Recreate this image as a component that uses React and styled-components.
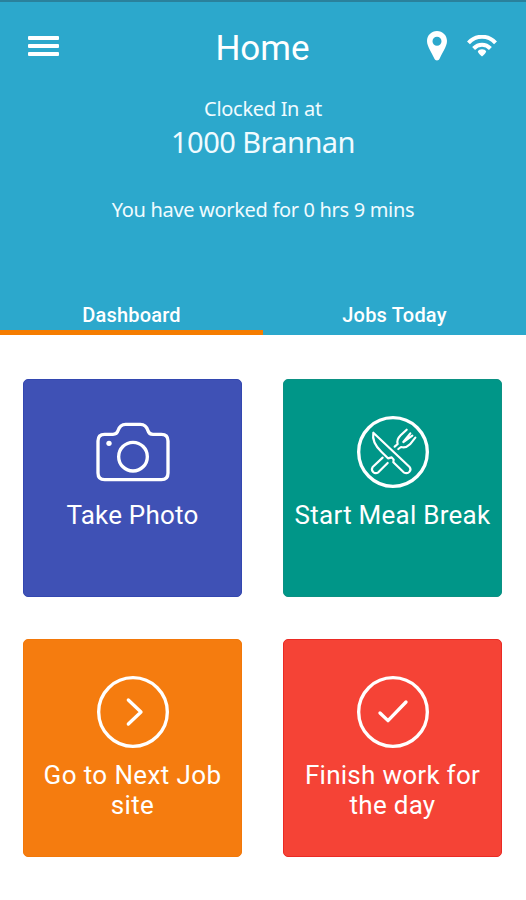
import { useState } from 'react';
import styled, { createGlobalStyle } from 'styled-components';

const tabs = ['Dashboard', 'Jobs Today'];

const actions = [
  { label: 'Take Photo', color: '#3f51b5', edge: '#3347b0', spacing: 0.2, icon: CameraIcon },
  { label: 'Start Meal Break', color: '#009688', edge: '#0b9183', spacing: 0.25, icon: MealIcon },
  { label: 'Go to Next Job site', color: '#f57c0f', edge: '#f27809', spacing: 0.38, icon: NextIcon },
  { label: 'Finish work for the day', color: '#f54336', edge: '#ea2a24', spacing: 0.28, icon: DoneIcon },
];

function App() {
  const [activeTab, setActiveTab] = useState('Dashboard');

  return (
    <Page>
      <GlobalStyle />
      <Header>
        <Toolbar>
          <MenuButton aria-label="Menu">
            <MenuBar />
            <MenuBar />
            <MenuBar />
          </MenuButton>
          <Title>Home</Title>
          <StatusIcons>
            <svg width="20" height="30" viewBox="0 0 20 30" fill="#fff">
              <path fillRule="evenodd" d="M10 0C4.400 0 0 4.400 0 9.900C0 15.500 5 22 7.300 27.600C8.200 30.200 11.800 30.200 12.700 27.600C15 22 20 15.500 20 9.900C20 4.400 15.600 0 10 0ZM10 5.700A4.500 4.500 0 1 1 10 14.700A4.500 4.500 0 0 1 10 5.700Z" />
            </svg>
            <svg width="30" height="22" viewBox="0 0 30 22" fill="none" stroke="#fff" strokeWidth="4">
              <path d="M1.500 7.800C9 -0.300 21 -0.300 28.500 7.800" />
              <path d="M6.600 13.500C11.400 8.600 18.600 8.600 23.400 13.500" />
              <path d="M15 14.200C13 14.200 11.500 15 10.800 16.600C11.300 18.500 13 20 15 21.500C17 20 18.700 18.500 19.200 16.600C18.500 15 17 14.200 15 14.200Z" fill="#fff" stroke="none" />
            </svg>
          </StatusIcons>
        </Toolbar>
        <ClockInfo>
          <ClockLabel>Clocked In at</ClockLabel>
          <Site>1000 Brannan</Site>
          <Worked>You have worked for 0 hrs 9 mins</Worked>
        </ClockInfo>
        <Tabs>
          {tabs.map((tab) => (
            <Tab key={tab} $active={tab === activeTab} onClick={() => setActiveTab(tab)}>
              {tab}
            </Tab>
          ))}
        </Tabs>
      </Header>
      <Grid>
        {actions.map(({ label, color, edge, spacing, icon: Icon }) => (
          <Card key={label} $color={color} $edge={edge}>
            <Icon />
            <CardLabel $spacing={spacing}>{label}</CardLabel>
          </Card>
        ))}
      </Grid>
    </Page>
  );
}

export default App;

function CameraIcon() {
  return (
    <LineIcon viewBox="47 29 222 222">
      <path d="M73 87H98C108 87 111 83 113 76C117 63 124 57 136 57H180C192 57 199 63 203 76C205 83 208 87 218 87H243C256 87 263 94 263 107V203C263 216 256 223 243 223H73C60 223 53 216 53 203V107C53 94 60 87 73 87Z" />
      <circle cx="158" cy="154" r="43" />
      <circle cx="86" cy="114" r="8" fill="#fff" stroke="none" />
    </LineIcon>
  );
}

function MealIcon() {
  return (
    <LineIcon viewBox="48 29 222 222">
      <circle cx="159" cy="140" r="103" />
      <g>
        <path d="M100 82C96 104 108 124 124 139L144 159L155 156L161 163L160 171L191 201C205 209 217 195 208 184Z" />
        <path d="M128 157L98 185C91 196 103 208 115 201L143 173" />
        <path d="M164 124L173 116C169 104 175 97 182 90L200 73" />
        <path d="M175 131L183 125C196 129 203 124 210 117L226 97" />
        <path d="M190 110L211 84M190 110L217 91" />
      </g>
    </LineIcon>
  );
}

function NextIcon() {
  return (
    <LineIcon viewBox="48 42 222 222">
      <circle cx="159" cy="153" r="103" />
      <path d="M145 117L183 153L145 189" />
    </LineIcon>
  );
}

function DoneIcon() {
  return (
    <LineIcon viewBox="48 42 222 222">
      <circle cx="159" cy="153" r="103" />
      <path d="M120 156L144 179L198 123" />
    </LineIcon>
  );
}

const GlobalStyle = createGlobalStyle`
  * {
    box-sizing: border-box;
  }

  body {
    margin: 0;
    background: #fff;
  }
`;

const Page = styled.div`
  width: 526px;
  height: 900px;
  overflow: hidden;
  background: #fff;
  font-family: Roboto, sans-serif;
  color: #fff;
`;

const Header = styled.header`
  display: flex;
  flex-direction: column;
  height: 335px;
  background: #2ca8cc;
  border-top: 2px solid #2a819c;
`;

const Toolbar = styled.div`
  display: grid;
  grid-template-columns: 1fr auto 1fr;
  align-items: center;
  height: 88px;
  padding: 0 29px 0 28px;
`;

const MenuButton = styled.button`
  display: flex;
  flex-direction: column;
  gap: 4px;
  width: 31px;
  padding: 0;
  border: none;
  background: none;
  cursor: pointer;
`;

const MenuBar = styled.span`
  height: 4px;
  border-radius: 1px;
  background: #fff;
`;

const Title = styled.h1`
  margin: 5px 0 0;
  font-size: 35px;
  font-weight: 400;
  line-height: 42px;
`;

const StatusIcons = styled.div`
  display: flex;
  justify-content: flex-end;
  align-items: center;
  gap: 20px;
`;

const ClockInfo = styled.div`
  display: flex;
  flex-direction: column;
  align-items: center;
  flex: 1;
  padding-top: 5px;
  font-family: 'Noto Sans', sans-serif;
  color: #f0fbff;
`;

const ClockLabel = styled.div`
  font-size: 20px;
  line-height: 28px;
  letter-spacing: -0.3px;
`;

const Site = styled.div`
  font-size: 29px;
  line-height: 37px;
  letter-spacing: -0.55px;
`;

const Worked = styled.div`
  margin-top: 36px;
  font-size: 20px;
  line-height: 28px;
  letter-spacing: -0.32px;
`;

const Tabs = styled.nav`
  display: flex;
  height: 45px;
`;

const Tab = styled.button`
  flex: 1;
  padding: 9px 0 0;
  border: none;
  border-bottom: 5px solid ${({ $active }) => ($active ? '#f57c00' : 'transparent')};
  background: none;
  color: #fff;
  font-family: inherit;
  font-size: 20px;
  font-weight: 500;
  letter-spacing: 0.2px;
  cursor: pointer;
`;

const Grid = styled.main`
  display: grid;
  grid-template-columns: repeat(2, 219px);
  grid-auto-rows: 218px;
  gap: 42px 41px;
  padding: 44px 23px;
`;

const Card = styled.button`
  display: flex;
  flex-direction: column;
  align-items: center;
  padding: 35px 10px 0;
  border: 1px solid ${({ $edge }) => $edge};
  border-radius: 5px;
  background: ${({ $color }) => $color};
  color: #fff;
  font-family: inherit;
  cursor: pointer;
`;

const CardLabel = styled.span`
  margin-top: 11px;
  font-size: 26px;
  line-height: 30px;
  letter-spacing: ${({ $spacing }) => $spacing}px;
`;

const LineIcon = styled.svg`
  width: 74px;
  height: 74px;
  flex-shrink: 0;
  fill: none;
  stroke: #fff;
  stroke-width: 10px;
  stroke-linecap: round;
  stroke-linejoin: round;

  g {
    stroke-width: 6.5px;
  }
`;
